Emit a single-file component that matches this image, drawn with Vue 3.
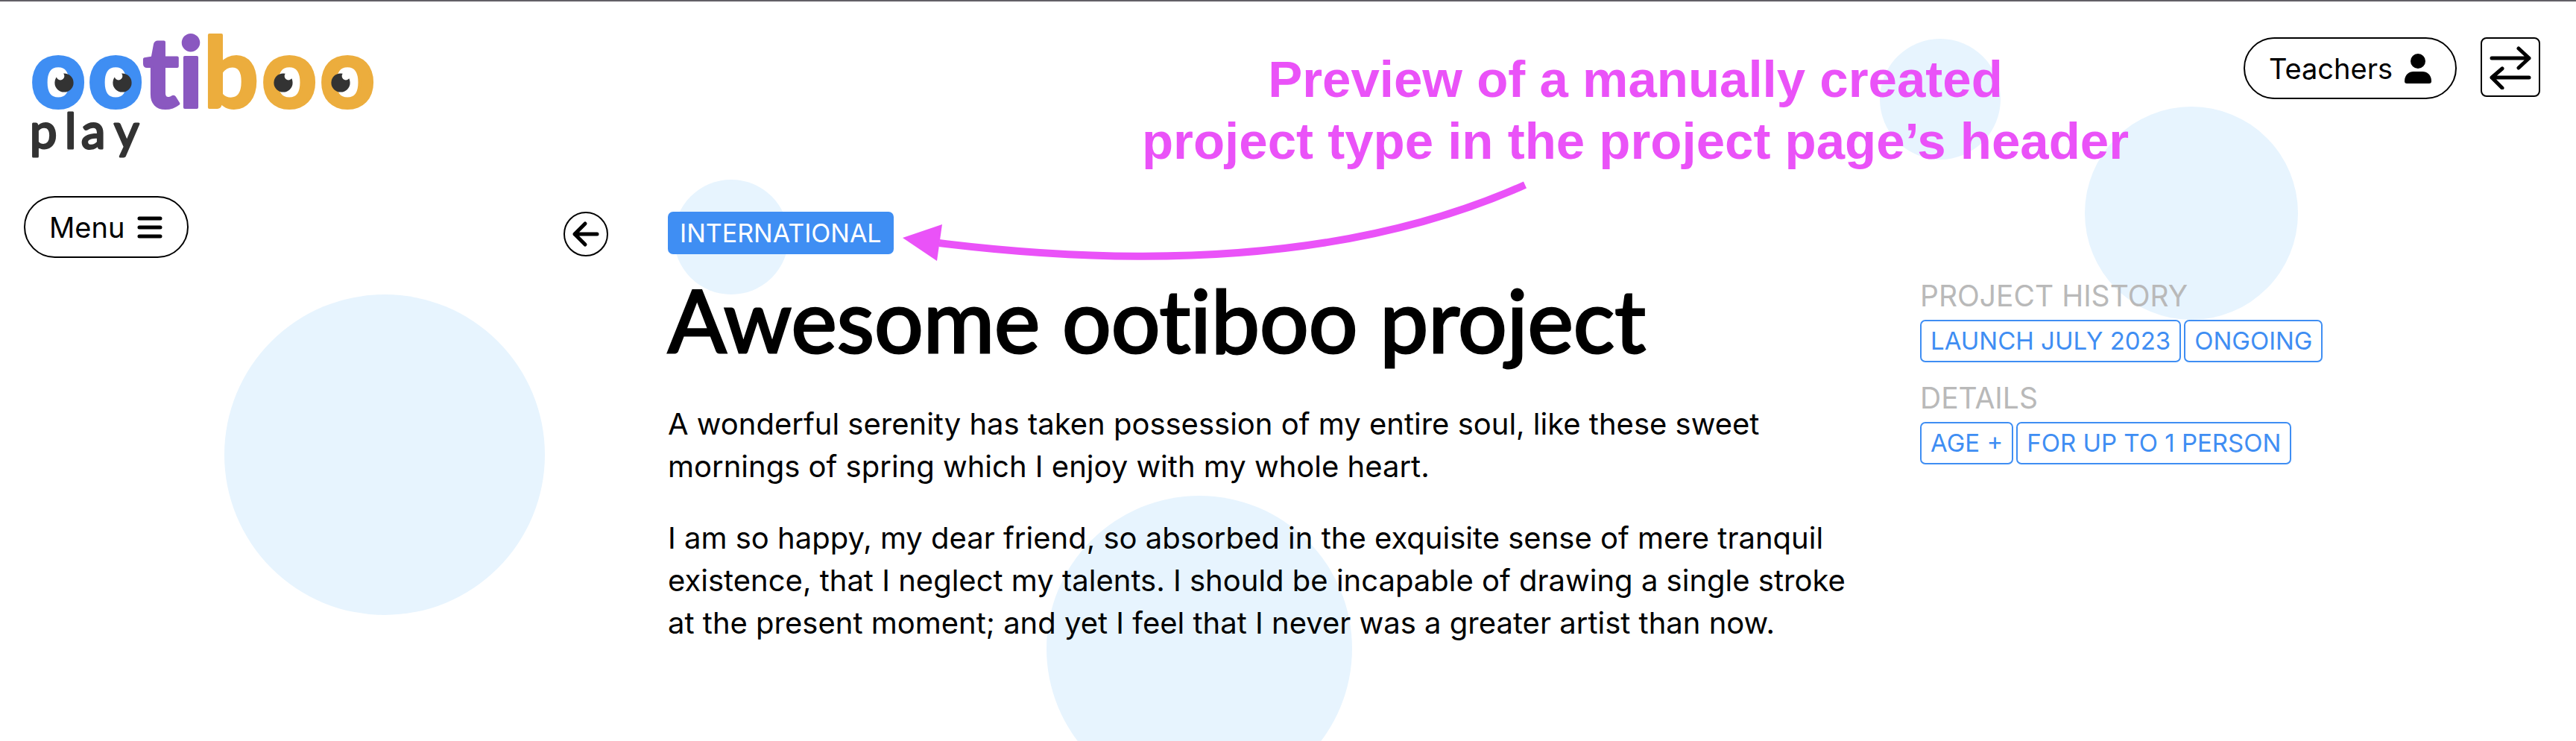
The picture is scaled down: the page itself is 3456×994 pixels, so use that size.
<script setup>
const letters = [
  { char: 'o', x: 78, tone: 'blue' },
  { char: 'o', x: 155, tone: 'blue' },
  { char: 't', x: 216, tone: 'violet' },
  { char: 'i', x: 256, tone: 'violet' },
  { char: 'b', x: 310, tone: 'amber' },
  { char: 'o', x: 388, tone: 'amber' },
  { char: 'o', x: 466, tone: 'amber' },
]

const pupils = [
  { x: 86, glint: 81 },
  { x: 164, glint: 159 },
  { x: 380, glint: 387 },
  { x: 457, glint: 464 },
]

const paragraphs = [
  'A wonderful serenity has taken possession of my entire soul, like these sweet mornings of spring which I enjoy with my whole heart.',
  'I am so happy, my dear friend, so absorbed in the exquisite sense of mere tranquil existence, that I neglect my talents. I should be incapable of drawing a single stroke at the present moment; and yet I feel that I never was a greater artist than now.',
]

const facts = [
  { title: 'PROJECT HISTORY', tags: ['LAUNCH JULY 2023', 'ONGOING'] },
  { title: 'DETAILS', tags: ['AGE +', 'FOR UP TO 1 PERSON'] },
]
</script>

<template>
  <div class="page">
    <div class="bubbles" aria-hidden="true">
      <span class="bubble bubble-left"></span>
      <span class="bubble bubble-tag"></span>
      <span class="bubble bubble-bottom"></span>
      <span class="bubble bubble-top"></span>
      <span class="bubble bubble-right"></span>
    </div>

    <header class="header">
      <a class="brand" href="#" aria-label="ootiboo play">
        <svg class="logo" width="520" height="224" viewBox="0 0 520 224">
          <text
            v-for="(l, i) in letters"
            :key="i"
            class="letter"
            :class="l.tone"
            :x="l.x"
            y="142"
          >{{ l.char }}</text>
          <g v-for="p in pupils" :key="p.x">
            <circle :cx="p.x" cy="109" r="12.6" fill="#333" />
            <circle :cx="p.glint" cy="100" r="5.4" fill="#fff" />
          </g>
          <text class="play" x="40 87 109 153" y="197">play</text>
        </svg>
      </a>
      <div class="actions">
        <button class="pill" type="button">
          Teachers
          <svg width="36" height="40" viewBox="0 0 36 40">
            <circle cx="18" cy="10" r="10" />
            <path d="M0 37C0 28 6 24 12 24H24C30 24 36 28 36 37Q36 40 33 40H3Q0 40 0 37z" />
          </svg>
        </button>
        <button class="swap" type="button" aria-label="Switch">
          <svg width="56" height="60" viewBox="0 0 56 60" class="line">
            <path d="M3 18H53M39 5L53 18L39 31M53 44H3M17 32L3 44L17 58" />
          </svg>
        </button>
      </div>
    </header>

    <main class="main">
      <nav class="rail">
        <button class="pill" type="button">
          Menu
          <svg width="36" height="32" viewBox="0 0 36 32" class="line">
            <path d="M4 4H32M4 16H32M4 28H32" />
          </svg>
        </button>
        <a class="back" href="#" aria-label="Back">
          <svg width="38" height="36" viewBox="0 0 38 36" class="line">
            <path d="M34 18H4M18 4L4 18L18 32" />
          </svg>
        </a>
      </nav>

      <article class="project">
        <span class="tag tag-solid">INTERNATIONAL</span>
        <h1>Awesome ootiboo project</h1>
        <p v-for="text in paragraphs" :key="text">{{ text }}</p>
      </article>

      <aside class="facts">
        <section v-for="fact in facts" :key="fact.title">
          <h2>{{ fact.title }}</h2>
          <div class="tags">
            <span v-for="tag in fact.tags" :key="tag" class="tag">{{ tag }}</span>
          </div>
        </section>
      </aside>
    </main>

    <div class="note">
      <p>Preview of a manually created<br />project type in the project page’s header</p>
      <svg width="860" height="120" viewBox="0 0 860 120">
        <path d="M60 85Q540 144 846 7" fill="none" stroke="#ea52f8" stroke-width="10" />
        <path d="M11 78L64 60L57 109z" fill="#ea52f8" />
      </svg>
    </div>
  </div>
</template>

<style>
body {
  margin: 0;
  background: #fff;
}
</style>

<style scoped>
.page {
  position: relative;
  box-sizing: border-box;
  min-height: 100vh;
  overflow: hidden;
  border-top: 2px solid #625f66;
  background: #fff;
  color: #000;
  font-family: Inter, 'Liberation Sans', sans-serif;
  font-size: 40px;
}

.bubble {
  position: absolute;
  border-radius: 50%;
  background: #e7f4fe;
}

.bubble-left {
  left: 301px;
  top: 393px;
  width: 430px;
  height: 430px;
}

.bubble-tag {
  left: 904px;
  top: 239px;
  width: 154px;
  height: 154px;
}

.bubble-bottom {
  left: 1404px;
  top: 663px;
  width: 410px;
  height: 410px;
}

.bubble-top {
  left: 2522px;
  top: 50px;
  width: 162px;
  height: 162px;
}

.bubble-right {
  left: 2797px;
  top: 141px;
  width: 286px;
  height: 286px;
}

.header {
  position: relative;
  display: flex;
  justify-content: space-between;
  align-items: flex-start;
  height: 261px;
}

.brand {
  display: block;
}

.logo {
  display: block;
}

.letter {
  font: 700 130px Lato, sans-serif;
  text-anchor: middle;
  stroke-width: 4px;
  stroke-linejoin: round;
}

.blue {
  fill: #3f8ef3;
  stroke: #3f8ef3;
}

.violet {
  fill: #8a58c0;
  stroke: #8a58c0;
}

.amber {
  fill: #ecad3d;
  stroke: #ecad3d;
}

.play {
  font: 400 65px Lato, sans-serif;
  fill: #333;
  stroke: #333;
  stroke-width: 3px;
  stroke-linejoin: round;
}

.actions {
  display: flex;
  gap: 32px;
  padding: 48px 48px 0 0;
}

.pill {
  display: flex;
  align-items: center;
  gap: 16px;
  box-sizing: border-box;
  height: 83px;
  padding: 0 32px;
  border: 2px solid #000;
  border-radius: 42px;
  background: #fff;
  color: #000;
  font: 400 38px Inter, 'Liberation Sans', sans-serif;
}

.swap {
  display: grid;
  place-items: center;
  box-sizing: border-box;
  width: 80px;
  height: 80px;
  padding: 0;
  border: 2px solid #000;
  border-radius: 8px;
  background: #fff;
}

.line {
  fill: none;
  stroke: #000;
  stroke-width: 5px;
  stroke-linecap: round;
  stroke-linejoin: round;
}

.main {
  position: relative;
  display: grid;
  grid-template-columns: 896fr 1680fr 880fr;
}

.rail {
  display: flex;
  justify-content: space-between;
  align-items: flex-start;
  padding: 0 80px 0 32px;
}

.back {
  display: grid;
  place-items: center;
  box-sizing: border-box;
  width: 60px;
  height: 60px;
  margin-top: 21px;
  border: 2px solid #000;
  border-radius: 50%;
  background: #fff;
}

.project {
  padding: 21px 80px 48px 0;
}

.tag {
  display: block;
  box-sizing: border-box;
  width: fit-content;
  padding: 0 12px;
  border: 2px solid #3f8ef3;
  border-radius: 7px;
  background: #fff;
  color: #3f8ef3;
  font-size: 33px;
  line-height: 53px;
  white-space: nowrap;
}

.tag-solid {
  padding: 0 14px;
  background: #3f8ef3;
  color: #fff;
  font-size: 34px;
}

h1 {
  margin: 28px 0 51px;
  font: 400 116px/120px Lato, sans-serif;
  font-variant-ligatures: none;
  -webkit-text-stroke: 3px #000;
}

.project p {
  margin: 0 0 39px;
  line-height: 57px;
}

.facts {
  padding-top: 110px;
}

.facts section {
  margin-bottom: 24px;
}

h2 {
  margin: 0 0 8px;
  color: #b9b9b9;
  font-weight: 400;
  font-size: 39px;
  line-height: 48px;
}

.tags {
  display: flex;
  gap: 4px;
}

.note {
  position: absolute;
  top: 63px;
  left: 1200px;
  color: #ea52f8;
  pointer-events: none;
}

.note p {
  margin: 0 0 10px 294px;
  width: 1400px;
  text-align: center;
  font: 700 69px/83px 'Liberation Sans', Arial, sans-serif;
}

.note svg {
  display: block;
}
</style>
